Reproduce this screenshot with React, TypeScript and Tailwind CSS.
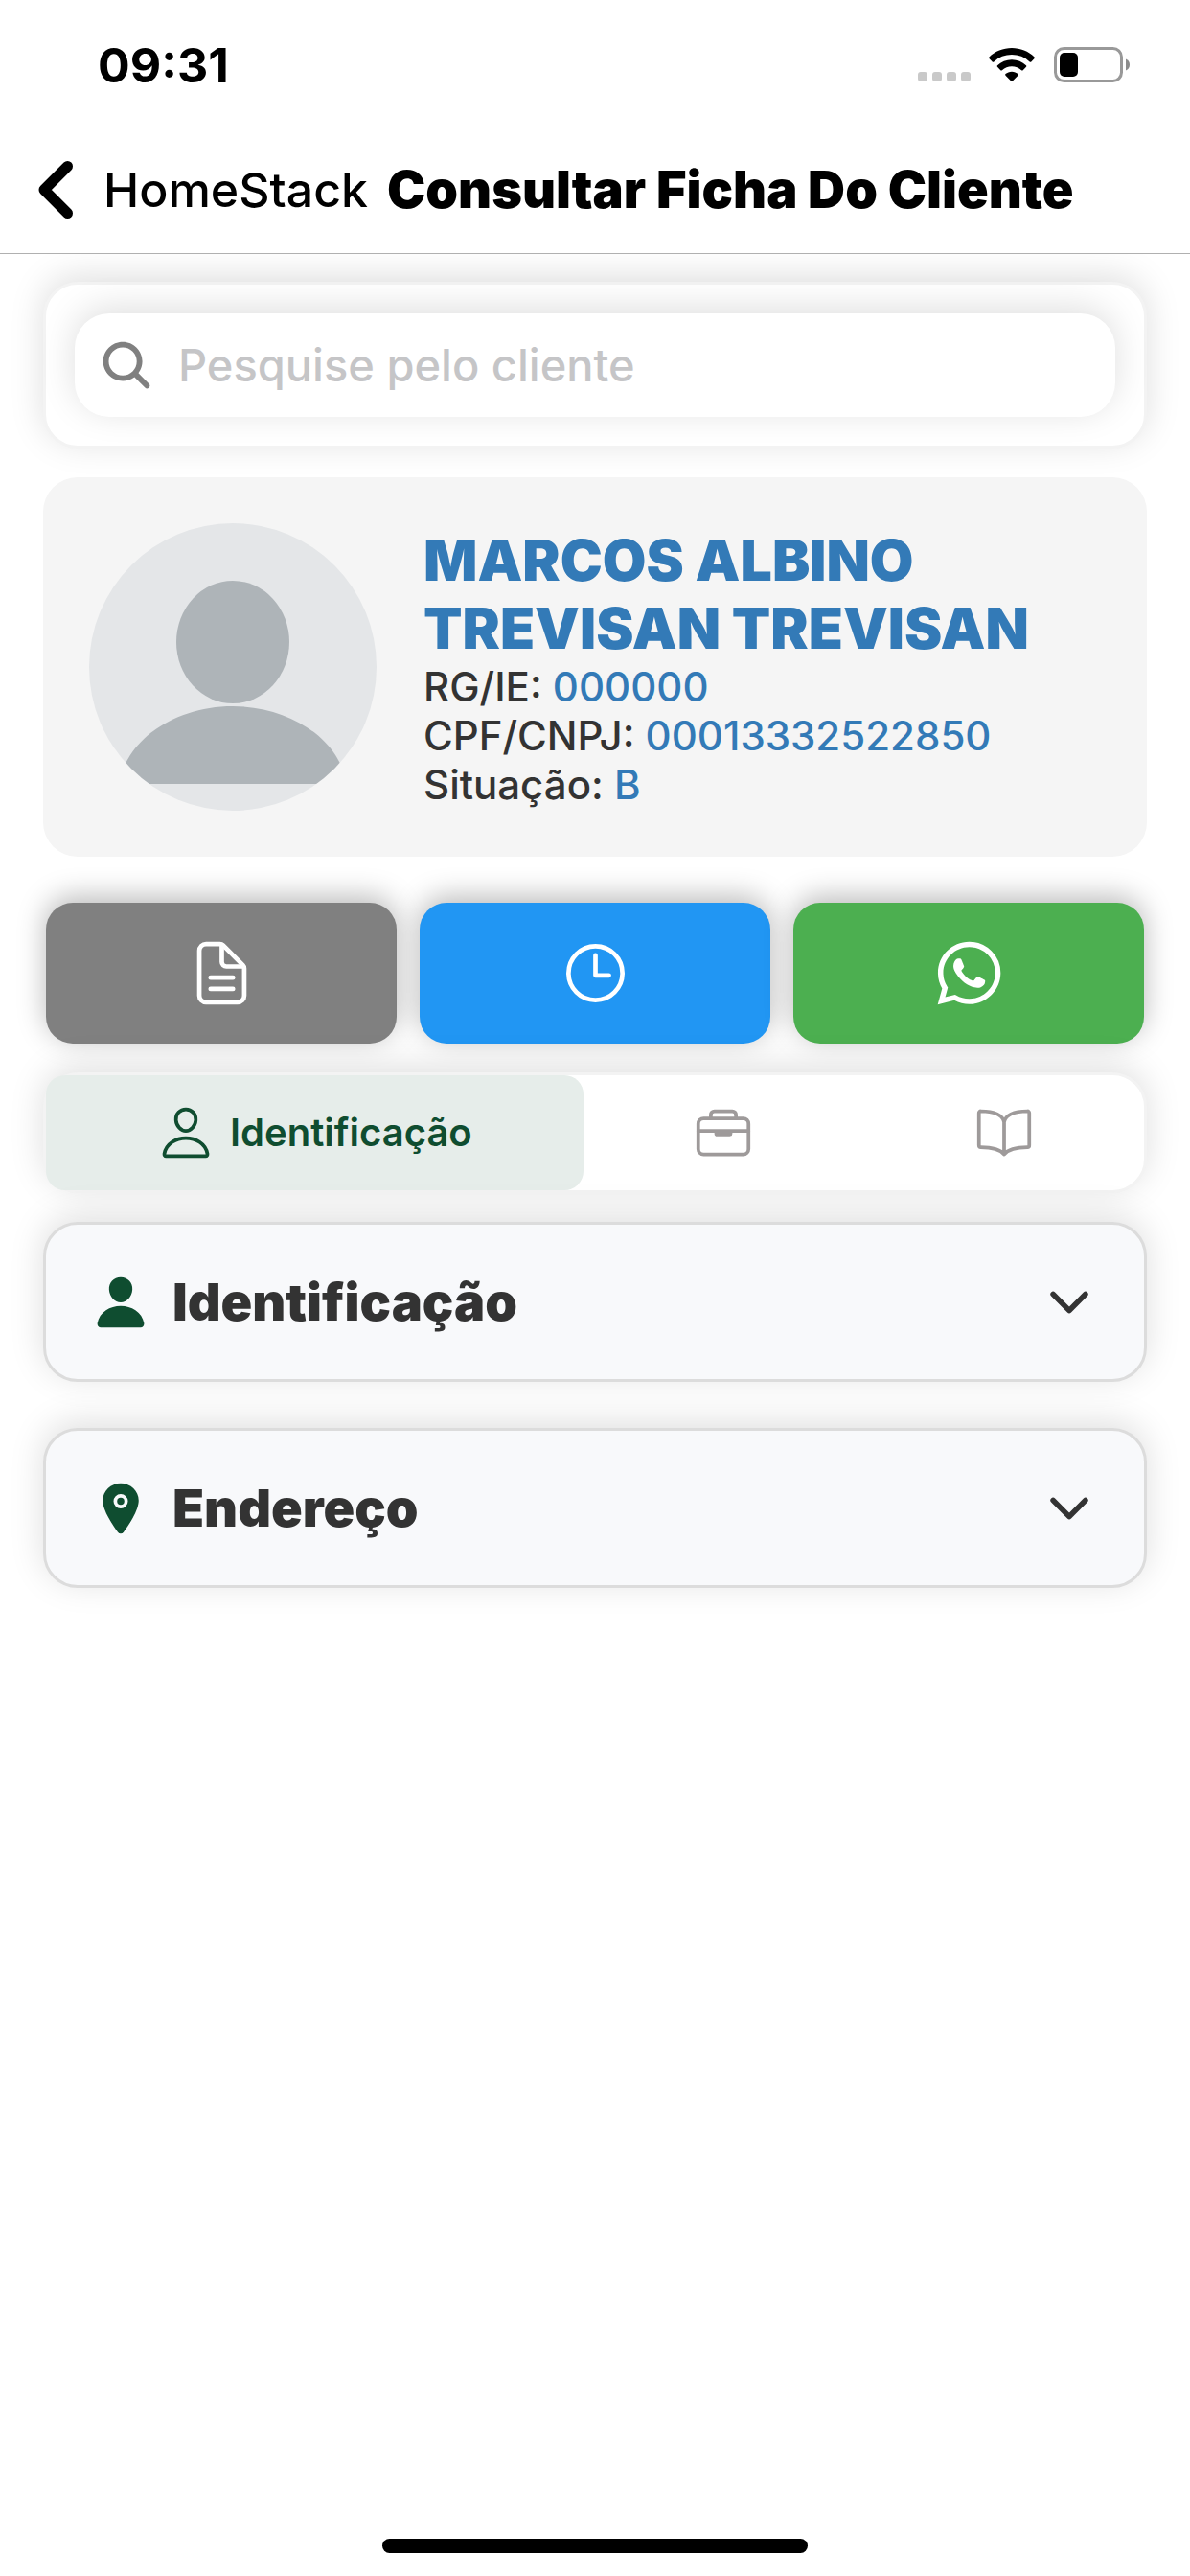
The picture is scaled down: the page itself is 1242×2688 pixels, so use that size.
import { useState } from "react";
import clsx from "clsx";
import {
  IoBookOutline,
  IoBriefcaseOutline,
  IoChevronDown,
  IoDocumentTextOutline,
  IoLocation,
  IoLogoWhatsapp,
  IoPerson,
  IoPersonOutline,
  IoSearch,
  IoTimeOutline,
} from "react-icons/io5";

const client = {
  name: "MARCOS ALBINO TREVISAN TREVISAN",
  fields: [
    { label: "RG/IE", value: "000000" },
    { label: "CPF/CNPJ", value: "00013332522850" },
    { label: "Situação", value: "B" },
  ],
};

const actions = [
  { label: "Ficha", icon: IoDocumentTextOutline, color: "bg-[#808080]" },
  { label: "Histórico", icon: IoTimeOutline, color: "bg-[#2196f3]" },
  { label: "WhatsApp", icon: IoLogoWhatsapp, color: "bg-[#4caf50]" },
];

const tabs = [
  { label: "Identificação", icon: IoPersonOutline },
  { label: "Profissional", icon: IoBriefcaseOutline },
  { label: "Referências", icon: IoBookOutline },
];

const sections = [
  { title: "Identificação", icon: IoPerson },
  { title: "Endereço", icon: IoLocation },
];

function StatusBar() {
  return (
    <div className="flex h-[135px] items-center justify-between pl-[102px] pr-[62px]">
      <span className="text-[50px] leading-[60px] font-bold">09:31</span>
      <div className="flex items-center">
        <div className="mt-6 mr-[19px] flex gap-[5px]">
          {[0, 1, 2, 3].map(i => (
            <span key={i} className="h-[10px] w-[10px] rounded-[3px] bg-[#c9c9c9]" />
          ))}
        </div>
        <svg className="mr-5 h-9 w-12" viewBox="0 0 48 36" aria-hidden="true">
          <path d="M24 0C33 0 41.500 3.500 47.600 9.400Q48.300 10.200 47.600 11L44.300 14.400Q43.500 15.100 42.700 14.400A27 27 0 0 0 5.300 14.400Q4.500 15.100 3.700 14.400L.4 11Q-.3 10.200.4 9.400C6.500 3.500 15 0 24 0Z" />
          <path d="M24 12.300C29.700 12.300 35 14.500 39 18.200Q39.800 19 39 19.800L35.700 23.200Q34.900 23.900 34.100 23.200A15 15 0 0 0 13.900 23.200Q13.100 23.900 12.300 23.200L9 19.800Q8.200 19 9 18.200C13 14.500 18.300 12.300 24 12.300Z" />
          <path d="M24 24.700C26.500 24.700 28.800 25.600 30.500 27.100Q31.300 27.900 30.500 28.700L24.800 34.500Q24 35.300 23.200 34.500L17.500 28.700Q16.700 27.900 17.500 27.100C19.200 25.600 21.500 24.700 24 24.700Z" />
        </svg>
        <svg className="h-[37px] w-20" viewBox="0 0 80 37" aria-hidden="true">
          <rect x="1.500" y="1.500" width="69" height="34" rx="9" fill="none" stroke="#999" strokeWidth="3" />
          <rect x="6" y="6" width="19" height="25" rx="5" />
          <path d="M75 12.500C77.500 13.500 79 15.800 79 18.500S77.500 23.500 75 24.500Z" fill="#8c8c8c" />
        </svg>
      </div>
    </div>
  );
}

function Header() {
  return (
    <header className="flex h-[130px] items-center border-b border-[#b0b0b0] pb-1 pl-10">
      <a href="#home" className="flex items-center gap-8 text-[50px] leading-[60px] font-medium">
        <svg className="h-[60px] w-9" viewBox="0 0 36 60" fill="none" stroke="currentColor" strokeWidth="11" strokeLinecap="round" strokeLinejoin="round" aria-hidden="true">
          <path d="M30.500 5.500 6 30l24.500 24.500" />
        </svg>
        HomeStack
      </a>
      <h1 className="ml-5 text-[54px] leading-[60px] font-black whitespace-nowrap">Consultar Ficha Do Cliente</h1>
    </header>
  );
}

function Avatar() {
  return (
    <svg className="size-[300px] shrink-0 rounded-full bg-[#e4e6e8]" viewBox="0 0 300 300" fill="#aeb4b8" aria-hidden="true">
      <ellipse cx="150" cy="124" rx="59" ry="64" />
      <path d="M32 272C36 230 86 191 150 191S264 230 268 272Z" />
    </svg>
  );
}

export default function App() {
  const [activeTab, setActiveTab] = useState(0);
  const [search, setSearch] = useState("");

  return (
    <div className="flex min-h-screen flex-col bg-white font-['Inter','Liberation_Sans',sans-serif] text-black">
      <StatusBar />
      <Header />

      <main className="flex flex-col overflow-hidden px-[45px] pt-[29px] pb-12">
        <div className="rounded-[36px] border-[3px] border-[#f3f3f3] bg-white p-[30px] shadow-[0_-6px_36px_rgba(0,0,0,0.13)]">
          <label className="flex h-[108px] items-center gap-6 rounded-[36px] bg-white px-6 shadow-[0_-6px_36px_rgba(0,0,0,0.13)]">
            <IoSearch className="size-[60px] shrink-0 text-[#808080]" />
            <input
              type="text"
              aria-label="Pesquise pelo cliente"
              placeholder="Pesquise pelo cliente"
              value={search}
              onChange={e => setSearch(e.target.value)}
              className="min-w-0 flex-1 text-[47px] font-medium outline-none placeholder:text-[#c5c5c7]"
            />
          </label>
        </div>

        <section className="mt-[30px] flex min-h-[396px] items-center gap-[49px] rounded-[36px] bg-[#f5f5f5] px-12">
          <Avatar />
          <div className="min-w-0 flex-1">
            <h2 className="text-[59px] leading-[71px] font-black text-[#337ab7]">{client.name}</h2>
            {client.fields.map(field => (
              <p key={field.label} className="text-[42px] leading-[51px] font-medium text-[#333333]">
                {field.label}: <span className="text-[#337ab7]">{field.value}</span>
              </p>
            ))}
          </div>
        </section>

        <div className="mt-12 grid grid-cols-3 gap-6 px-[3px]">
          {actions.map(({ label, icon: Icon, color }) => (
            <button key={label} type="button" aria-label={label} className={clsx("flex h-[147px] items-center justify-center rounded-[28px] text-white shadow-[0_-6px_30px_rgba(0,0,0,0.28)]", color)}>
              <Icon className="size-[75px]" />
            </button>
          ))}
        </div>

        <div role="tablist" className="mt-[30px] grid grid-cols-[23fr_12fr_12fr] rounded-[36px] border-[3px] border-[#f3f3f3] bg-white shadow-[0_-6px_36px_rgba(0,0,0,0.13)]">
          {tabs.map(({ label, icon: Icon }, i) => (
            <button
              key={label}
              type="button"
              role="tab"
              aria-label={label}
              aria-selected={activeTab === i}
              onClick={() => setActiveTab(i)}
              className={clsx("flex h-[120px] items-center justify-center gap-4 rounded-[20px]", activeTab === i ? "bg-[#e6edea] text-[#0f4d30]" : "text-[#9e9a9a]")}
            >
              <Icon className="size-[60px]" />
              {activeTab === i && <span className="text-[40px] leading-[48px] font-semibold">{label}</span>}
            </button>
          ))}
        </div>

        <div className="mt-[30px] flex flex-col gap-12">
          {sections.map(({ title, icon: Icon }) => (
            <button key={title} type="button" aria-expanded="false" className="flex h-[167px] items-center gap-6 rounded-[36px] border-[3px] border-[#dcdcdc] bg-[#f8f9fb] px-12 shadow-[0_-6px_36px_rgba(0,0,0,0.13)]">
              <Icon className="size-[60px] text-[#0f4d30]" />
              <span className="flex-1 text-left text-[54px] leading-[60px] font-black text-[#333333]">{title}</span>
              <IoChevronDown className="size-[60px] text-[#333333]" />
            </button>
          ))}
        </div>
      </main>

      <div className="mx-auto mt-auto mb-6 h-[15px] w-[444px] rounded-full bg-black" />
    </div>
  );
}
